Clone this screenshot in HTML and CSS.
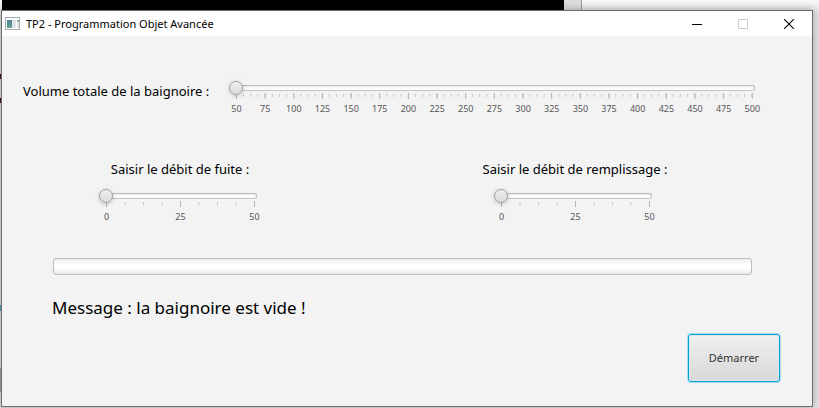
FILE: index.html
```html
<!DOCTYPE html>
<html lang="fr">
<head>
<meta charset="utf-8">
<title>TP2 - Programmation Objet Avancée</title>
<link rel="stylesheet" href="styles.css">
</head>
<body>
<div class="backdrop"><div class="console"></div><div class="console-scroll"></div></div>
<main class="window">
  <header class="titlebar">
    <svg class="app-icon" width="16" height="14" viewBox="0 0 16 14" aria-hidden="true">
      <defs><linearGradient id="pane" x1="0" y1="0" x2="0" y2="1"><stop offset="0" stop-color="#4f82a5"/><stop offset="1" stop-color="#62a58a"/></linearGradient></defs>
      <rect x=".5" y=".5" width="14" height="12" fill="#fff" stroke="#a4abb2"/>
      <rect x="2" y="3" width="5" height="8" fill="url(#pane)"/>
      <rect x="7" y="3" width="4" height="8" fill="#dfe3e5"/>
      <rect x="12" y="3" width="2" height="8" fill="#e4e8ea"/>
      <rect x="12" y="3" width="2" height="2" fill="#7fb59c"/>
    </svg>
    <h1 class="title">TP2 - Programmation Objet Avancée</h1>
    <div class="controls">
      <button class="control" aria-label="Réduire"><svg width="10" height="10" viewBox="0 0 10 10"><path d="M0 5.5h10" stroke="#000"/></svg></button>
      <button class="control" aria-label="Agrandir" disabled><svg width="10" height="10" viewBox="0 0 10 10"><path d="M.5 .5h9v9h-9z" fill="none" stroke="#ccc"/></svg></button>
      <button class="control" aria-label="Fermer"><svg width="10" height="10" viewBox="0 0 10 10"><path d="M0 0l10 10M10 0L0 10" stroke="#000" stroke-width="1.1"/></svg></button>
    </div>
  </header>
  <div class="content">
    <div class="volume">
      <label class="label" for="volume">Volume totale de la baignoire :</label>
      <div class="slider">
        <input type="range" id="volume" min="50" max="500" value="50">
        <div class="ticks ticks-fine"></div>
        <div class="numbers"><span>50</span><span>75</span><span>100</span><span>125</span><span>150</span><span>175</span><span>200</span><span>225</span><span>250</span><span>275</span><span>300</span><span>325</span><span>350</span><span>375</span><span>400</span><span>425</span><span>450</span><span>475</span><span>500</span></div>
      </div>
    </div>
    <div class="rates">
      <div class="rate">
        <label class="label" for="leak">Saisir le débit de fuite :</label>
        <div class="slider">
          <input type="range" id="leak" min="0" max="50" value="0">
          <div class="ticks"></div>
          <div class="numbers"><span>0</span><span>25</span><span>50</span></div>
        </div>
      </div>
      <div class="rate">
        <label class="label" for="fill">Saisir le débit de remplissage :</label>
        <div class="slider">
          <input type="range" id="fill" min="0" max="50" value="0">
          <div class="ticks"></div>
          <div class="numbers"><span>0</span><span>25</span><span>50</span></div>
        </div>
      </div>
    </div>
    <progress class="level" value="0" max="100" aria-label="Niveau de la baignoire"></progress>
    <p class="message">Message : la baignoire est vide !</p>
    <button class="start">Démarrer</button>
  </div>
</main>
</body>
</html>
```
FILE: styles.css
```css
* { box-sizing: border-box; }

body {
  margin: 0;
  min-height: 100vh;
  display: flex;
  flex-direction: column;
  /* slivers of the windows that lie behind, along the left edge */
  background:
    linear-gradient(#4a1408, #4a1408) 0 74px / 2px 5px no-repeat,
    linear-gradient(#4a1408, #4a1408) 0 98px / 2px 5px no-repeat,
    linear-gradient(#5aa8d0, #5aa8d0) 0 305px / 2px 6px no-repeat,
    linear-gradient(#a8a8a8, #a8a8a8) 0 368px / 2px 24px no-repeat,
    #e4e4e4;
  color: #000;
  font-family: "Noto Sans", "Open Sans", sans-serif;
}

.backdrop {
  display: flex;
  height: 10px;
  padding-left: 2px;
  background: linear-gradient(#fafafa, #e6e6e6);
}
.console { flex: 0 0 562px; background: #000; }
.console-scroll { flex: 0 0 18px; background: #dcdcdc; border-right: 1px solid #999; }

.window {
  flex: 1;
  display: flex;
  flex-direction: column;
  margin: 0 6px 1px 1px;
  border: 1px solid #6e6c6e;
  background: #f3f3f3;
  box-shadow: 0 0 8px rgba(0, 0, 0, .3);
}

.titlebar {
  display: flex;
  align-items: center;
  height: 25px;
  padding-left: 3px;
  background: #fff;
}
.title {
  flex: 1;
  margin: 0 0 0 5px;
  font-size: 11px;
  line-height: 16px;
  font-weight: 400;
}
.controls { display: flex; }
.control {
  display: flex;
  align-items: center;
  justify-content: center;
  width: 46px;
  height: 25px;
  padding: 0;
  border: 0;
  background: none;
}

.content {
  flex: 1;
  display: flex;
  flex-direction: column;
}
.label { font-size: 13px; line-height: 20px; white-space: nowrap; }

.volume {
  display: flex;
  padding: 45px 57px 0 21px;
}
.volume .label { flex: 0 0 206px; }
.volume .slider { flex: 1; }

.slider input {
  display: block;
  width: 100%;
  height: 14px;
  margin: 0;
  appearance: none;
  background: none;
}
.slider input::-webkit-slider-runnable-track {
  height: 6px;
  margin-left: 2px;
  border: 1px solid #b9bab9;
  border-bottom-color: #c8c8c8;
  border-radius: 3px;
  background: linear-gradient(#e8e8e8, #fff 50%, #f6f6f6);
}
.slider input::-webkit-slider-thumb {
  appearance: none;
  width: 14px;
  height: 14px;
  margin: -5px 0 0 -3px;
  border: 1px solid #a0a0a0;
  border-radius: 50%;
  background: linear-gradient(#f0f0f0, #dadada);
  box-shadow: 0 1px 4px rgba(0, 0, 0, .2);
}

.ticks {
  height: 6px;
  margin: -2px 2px 0 7px;
  background:
    linear-gradient(90deg, #b4b4b4 1px, transparent 1px) 0 0 / calc((100% - 1px) / 2) 6px repeat-x,
    linear-gradient(90deg, #c4c4c4 1px, transparent 1px) 0 1px / calc((100% - 1px) / 8) 3px repeat-x;
}
.ticks-fine {
  background:
    linear-gradient(90deg, #b4b4b4 1px, transparent 1px) 0 0 / calc((100% - 1px) / 18) 6px repeat-x,
    linear-gradient(90deg, #c4c4c4 1px, transparent 1px) 0 1px / calc((100% - 1px) / 72) 3px repeat-x;
}
.numbers {
  display: flex;
  justify-content: space-between;
  margin: 3px 2px 0 7px;
  font-size: 9px;
  line-height: 14px;
  color: #555;
}
.numbers span {
  display: flex;
  justify-content: center;
  width: 1px;
}

.rates {
  display: grid;
  grid-template-columns: 356fr 434fr;
  padding: 43px 20px 0 0;
}
.rate {
  display: flex;
  flex-direction: column;
  align-items: center;
}
.rate .slider { width: 162px; padding: 10px 4px 0 0; }

.level {
  display: block;
  appearance: none;
  width: auto;
  height: 17px;
  margin: 34px 60px 0 51px;
  border: 0;
}
.level::-webkit-progress-bar {
  border: 1px solid #bdbdbd;
  border-radius: 3px;
  background: linear-gradient(#f0f0f0, #fff 45%, #fff 60%, #e8e8e8);
}
.level::-webkit-progress-value { background: #039ed3; }

.message {
  margin: 20px 50px 0;
  font-size: 17px;
  line-height: 26px;
}

.start {
  align-self: flex-end;
  width: 92px;
  height: 48px;
  margin: 13px 32px 0 0;
  padding: 0;
  border: 1px solid #039ed3;
  border-radius: 3px;
  background: linear-gradient(#f0f0f0, #d8d8d8);
  box-shadow: 0 0 0 1px #a8dcf0, inset 0 0 0 1px #dcebf0;
  color: #333;
  font: 11px/16px "Noto Sans", "Open Sans", sans-serif;
}
```
